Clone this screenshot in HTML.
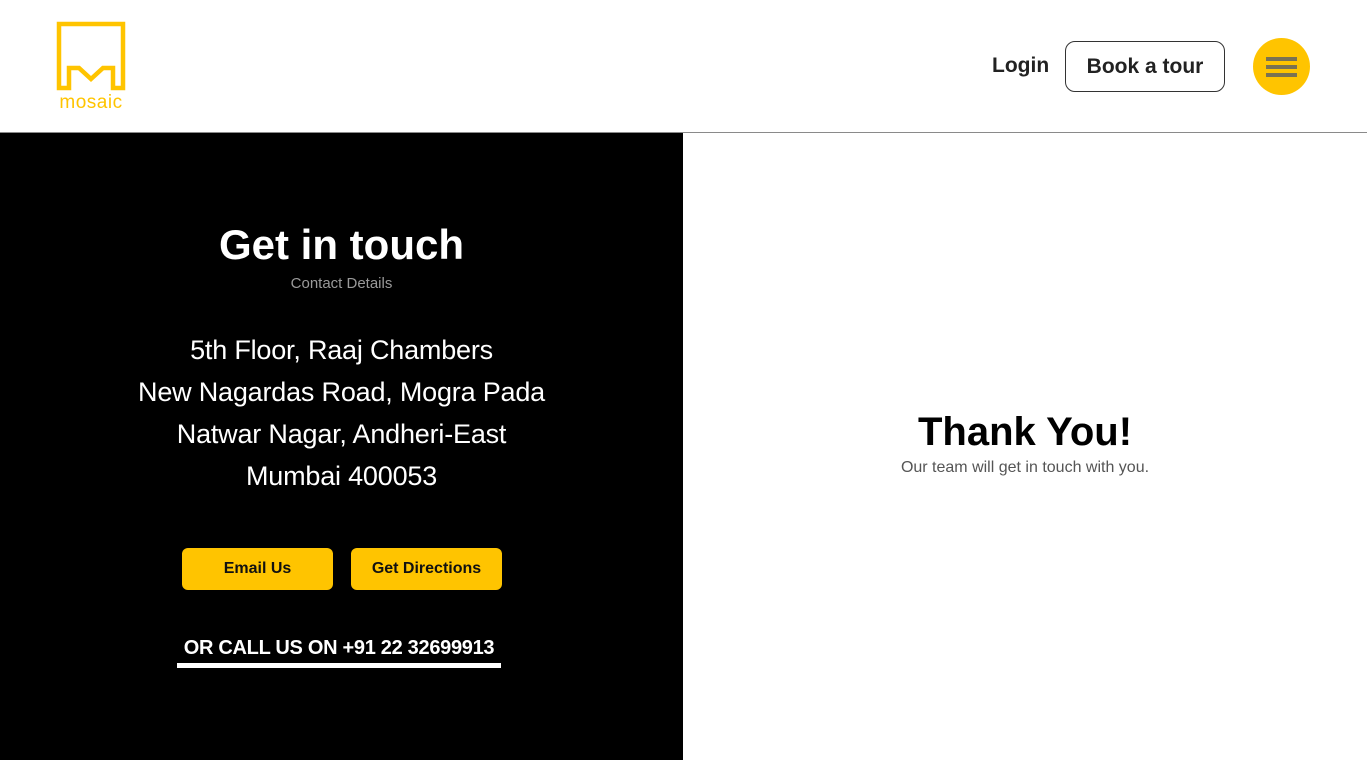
<!DOCTYPE html>
<html><head><meta charset="utf-8"><style>
*{margin:0;padding:0;box-sizing:border-box}
body{width:1367px;height:760px;overflow:hidden;background:#fff;font-family:"Liberation Sans",sans-serif;position:relative}
.hdr{position:absolute;left:0;top:0;width:1367px;height:133px;border-bottom:1px solid #8a8a8a;background:#fff}
.login{position:absolute;left:992px;top:54px;font-size:21px;color:#222;font-weight:bold}
.tour{position:absolute;left:1065px;top:41px;width:160px;height:51px;border:1.5px solid #333;border-radius:10px;font-size:21px;color:#222;font-weight:bold;text-align:center;line-height:49px}
.menu{position:absolute;left:1253px;top:38px;width:57px;height:57px;border-radius:50%;background:#ffc400}
.menu i{position:absolute;left:13px;width:31px;height:4px;background:#7a7252}
.left{position:absolute;left:0;top:133px;width:683px;height:627px;background:#000;color:#fff;text-align:center}
h1{position:absolute;left:0;width:683px;top:88px;font-size:42px;font-weight:bold}
.sub{position:absolute;left:0;width:683px;top:142px;font-size:15px;color:#9a9a9a}
.addr{position:absolute;left:0;width:683px;top:196px;font-size:27px;line-height:42px;letter-spacing:-.2px}
.btn{position:absolute;top:415px;width:151px;height:42px;background:#ffc400;border-radius:6px;color:#111;font-weight:bold;font-size:16px;line-height:42px}
.call{position:absolute;left:177px;top:500px;width:324px;font-size:20px;font-weight:bold;line-height:30px;border-bottom:5px solid #fff;white-space:nowrap;letter-spacing:-.3px}
.ty{position:absolute;left:683px;width:684px;text-align:center;top:410px;font-size:40px;font-weight:bold;color:#000}
.tys{position:absolute;left:683px;width:684px;text-align:center;top:459px;font-size:16px;color:#555}
</style></head><body>
<div class="hdr">
<svg style="position:absolute;left:54px;top:21px" width="74" height="92" viewBox="0 0 74 92">
<path d="M5 3 H69 V67 H59 V47 H49 L37 58 L25 47 H15 V67 H5 Z" fill="none" stroke="#ffc400" stroke-width="4.5" stroke-linejoin="miter"/>
<text x="37" y="87" text-anchor="middle" font-family="Liberation Sans,sans-serif" font-size="19" letter-spacing="0.5" fill="#ffc400">mosaic</text>
</svg>
<div class="login">Login</div>
<div class="tour">Book a tour</div>
<div class="menu"><i style="top:19px"></i><i style="top:27px"></i><i style="top:35px"></i></div>
</div>
<div class="left">
<h1>Get in touch</h1>
<div class="sub">Contact Details</div>
<div class="addr">5th Floor, Raaj Chambers<br>New Nagardas Road, Mogra Pada<br>Natwar Nagar, Andheri-East<br>Mumbai 400053</div>
<div class="btn" style="left:182px">Email Us</div>
<div class="btn" style="left:351px">Get Directions</div>
<div class="call">OR CALL US ON +91 22 32699913</div>
</div>
<div class="ty">Thank You!</div>
<div class="tys">Our team will get in touch with you.</div>
</body></html>
